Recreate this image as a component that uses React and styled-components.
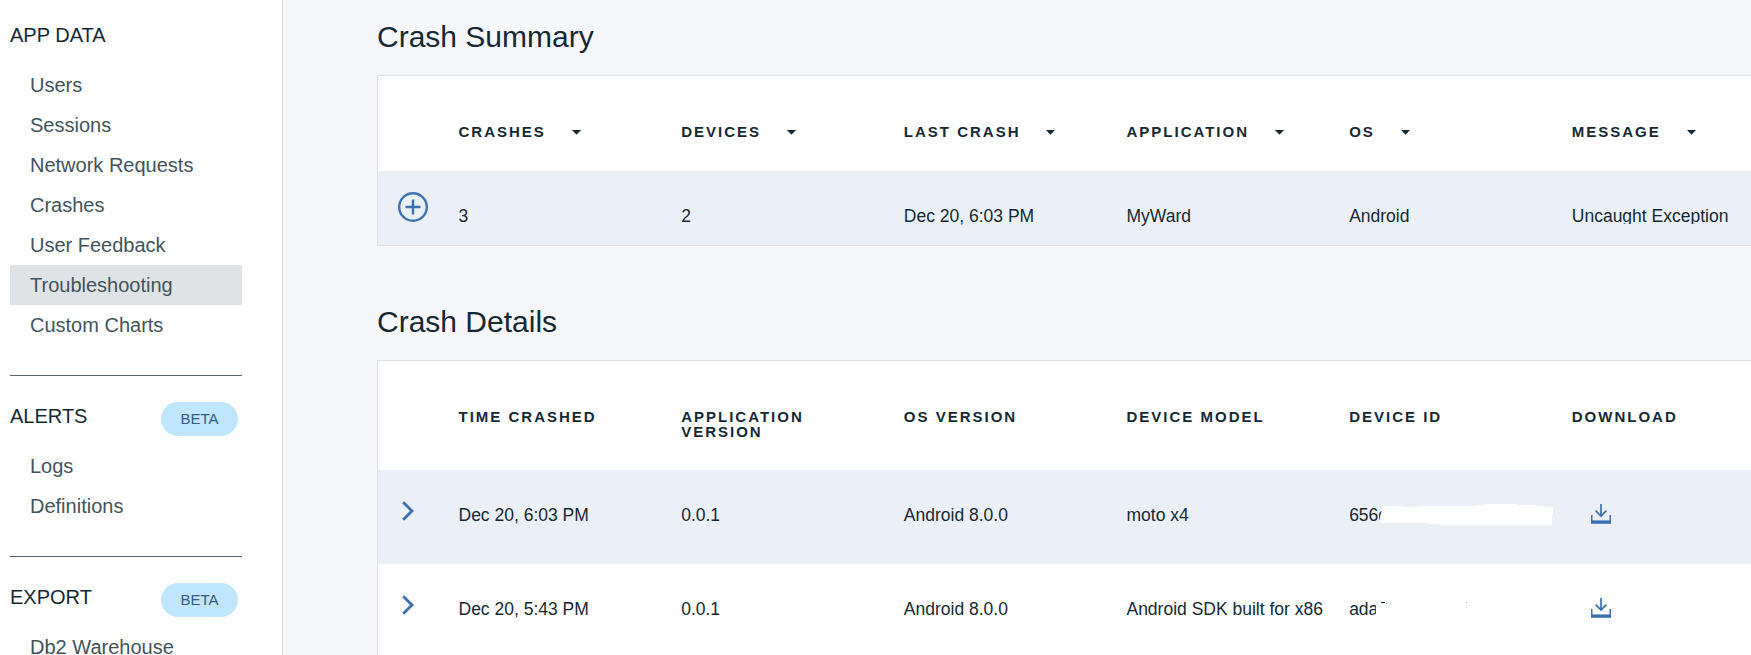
import React from "react";
import styled, { createGlobalStyle } from "styled-components";

const GlobalStyle = createGlobalStyle`
  * { box-sizing: border-box; }
  body {
    margin: 0;
    overflow: hidden;
    background: #f5f7fa;
    color: #152935;
    font-family: "Liberation Sans", Arial, sans-serif;
  }
`;

const Page = styled.div`
  display: flex;
  height: 655px;
  overflow: hidden;
`;

const Sidebar = styled.nav`
  flex: none;
  width: 283px;
  padding-left: 10px;
  background: #fff;
  border-right: 1px solid #dfe3e8;
`;

const NavSection = styled.section`
  width: 232px;
  height: ${(p) => p.$height}px;
  padding-top: ${(p) => p.$top}px;
  border-bottom: 1px solid #5a6872;
`;

const NavHeading = styled.div`
  display: flex;
  justify-content: space-between;
  padding-right: 4px;
  height: ${(p) => p.$height}px;
  font-size: 20px;
  line-height: 30px;
`;

const BetaHeading = styled(NavHeading)`
  line-height: 38px;
`;

const Beta = styled.span`
  width: 77px;
  height: 34px;
  margin-top: 5px;
  border-radius: 17px;
  background: #c0e6ff;
  color: #325c80;
  font-size: 15px;
  line-height: 34px;
  text-align: center;
`;

const NavItem = styled.a`
  display: block;
  height: 40px;
  padding-left: 20px;
  background: ${(p) => (p.$active ? "#dfe3e6" : "transparent")};
  color: #42535d;
  font-size: 20px;
  line-height: 40px;
  white-space: nowrap;
`;

const Main = styled.main`
  flex: 1;
  min-width: 0;
  padding: 19px 0 0 94px;
  overflow: hidden;
`;

const Panel = styled.section`
  width: 1418px;
  margin-bottom: 58px;
`;

const Title = styled.h2`
  height: 56px;
  margin: 0;
  font-size: 30px;
  font-weight: 400;
  line-height: 36px;
`;

const Table = styled.div`
  background: #fff;
  border: 1px solid #dfe3e6;
`;

const Row = styled.div`
  display: grid;
  grid-template-columns: 80.5px repeat(6, 222.66px);
  height: ${(p) => p.$height}px;
  padding-top: ${(p) => p.$top}px;
  background: ${(p) => (p.$shaded ? "#ebf0f7" : "transparent")};
`;

const HeaderCell = styled.div`
  display: flex;
  padding-right: 60px;
  font-size: 15px;
  font-weight: 700;
  line-height: 15px;
  letter-spacing: 2px;
  white-space: ${(p) => (p.$sortable ? "nowrap" : "normal")};
`;

const Cell = styled.div`
  height: ${(p) => (p.$clipped ? "18px" : "20px")};
  overflow: ${(p) => (p.$clipped ? "hidden" : "visible")};
  font-size: 17.5px;
  line-height: 20px;
  white-space: nowrap;
`;

const IconCell = styled.div`
  padding-left: ${(p) => p.$left}px;
  margin-top: ${(p) => p.$shift}px;
  height: 30px;
`;

const Icon = styled.svg`
  display: block;
`;

const Caret = styled.svg`
  flex: none;
  margin: 6px 0 0 26px;
`;

const DeviceId = styled(Cell)`
  position: relative;
`;

const VisibleId = styled.span`
  display: inline-block;
  width: ${(p) => p.$width}px;
  overflow: hidden;
  vertical-align: top;
`;

const Redaction = styled.svg`
  position: absolute;
  left: 29px;
  top: -1px;
`;

const SortCaret = () => (
  <Caret width="9" height="5" viewBox="0 0 9 5">
    <path d="M0 0h9L4.5 4.7z" fill="#152935" />
  </Caret>
);

const Plus = () => (
  <Icon width="30" height="30" viewBox="0 0 30 30" fill="none" stroke="#3d70b2" strokeWidth="2.4">
    <circle cx="15" cy="15" r="13.8" />
    <path d="M15 7.5v15M7.5 15h15" />
  </Icon>
);

const Chevron = () => (
  <Icon width="12" height="20" viewBox="0 0 12 20" fill="none" stroke="#3d70b2" strokeWidth="2.8">
    <path d="M1.2 1.2L10 10L1.2 18.8" />
  </Icon>
);

const Download = () => (
  <Icon width="20" height="20" viewBox="0 0 20 20" fill="none" stroke="#3d70b2">
    <path d="M10 0v12M4.6 6.6L10 12l5.4-5.4" strokeWidth="1.7" />
    <path d="M.75 11v8M19.25 11v8" strokeWidth="1.5" />
    <path d="M0 18.1h20" strokeWidth="3.4" />
  </Icon>
);

const summaryHeads = ["CRASHES", "DEVICES", "LAST CRASH", "APPLICATION", "OS", "MESSAGE"];
const detailHeads = ["TIME CRASHED", "APPLICATION VERSION", "OS VERSION", "DEVICE MODEL", "DEVICE ID", "DOWNLOAD"];

export default function App() {
  return (
    <Page>
      <GlobalStyle />
      <Sidebar>
        <NavSection $height={376} $top={20}>
          <NavHeading $height={45}>APP DATA</NavHeading>
          {["Users", "Sessions", "Network Requests", "Crashes", "User Feedback", "Troubleshooting", "Custom Charts"].map((t) => (
            <NavItem key={t} $active={t === "Troubleshooting"}>{t}</NavItem>
          ))}
        </NavSection>
        <NavSection $height={181} $top={21}>
          <BetaHeading $height={49}>ALERTS<Beta>BETA</Beta></BetaHeading>
          <NavItem>Logs</NavItem>
          <NavItem>Definitions</NavItem>
        </NavSection>
        <NavSection $height={181} $top={21}>
          <BetaHeading $height={49}>EXPORT<Beta>BETA</Beta></BetaHeading>
          <NavItem>Db2 Warehouse</NavItem>
        </NavSection>
      </Sidebar>
      <Main>
        <Panel>
          <Title>Crash Summary</Title>
          <Table>
            <Row $height={95} $top={48}>
              <span />
              {summaryHeads.map((t) => (
                <HeaderCell key={t} $sortable>{t}<SortCaret /></HeaderCell>
              ))}
            </Row>
            <Row $height={74} $top={35} $shaded>
              <IconCell $left={20} $shift={-14}><Plus /></IconCell>
              <Cell>3</Cell>
              <Cell>2</Cell>
              <Cell>Dec 20, 6:03 PM</Cell>
              <Cell>MyWard</Cell>
              <Cell>Android</Cell>
              <Cell $clipped>Uncaught Exception</Cell>
            </Row>
          </Table>
        </Panel>
        <Panel>
          <Title>Crash Details</Title>
          <Table>
            <Row $height={109} $top={48}>
              <span />
              {detailHeads.map((t) => (
                <HeaderCell key={t}>{t}</HeaderCell>
              ))}
            </Row>
            <Row $height={94} $top={35} $shaded>
              <IconCell $left={24} $shift={-4}><Chevron /></IconCell>
              <Cell>Dec 20, 6:03 PM</Cell>
              <Cell>0.0.1</Cell>
              <Cell>Android 8.0.0</Cell>
              <Cell>moto x4</Cell>
              <DeviceId>
                <VisibleId $width={40}>656c</VisibleId>
                <Redaction width="175" height="22" viewBox="0 0 175 22">
                  <path d="M4 2H24V3H40V2H98V1H107V0H139V1H158V2H165V3H175V11H174V21H62V20H51V19H3V17H2V13L3 9L4 6Z" fill="#fff" />
                </Redaction>
              </DeviceId>
              <IconCell $left={19.5} $shift={-1}><Download /></IconCell>
            </Row>
            <Row $height={94} $top={35}>
              <IconCell $left={24} $shift={-4}><Chevron /></IconCell>
              <Cell>Dec 20, 5:43 PM</Cell>
              <Cell>0.0.1</Cell>
              <Cell>Android 8.0.0</Cell>
              <Cell>Android SDK built for x86</Cell>
              <DeviceId>
                <VisibleId $width={27}>ada</VisibleId>
                <Redaction width="100" height="22" viewBox="0 0 100 22">
                  <path d="M3 4h4v1H3z" fill="#152935" />
                  <path d="M8 5h1v1H8zM88 4h1v1h-1z" fill="#79a9cf" />
                </Redaction>
              </DeviceId>
              <IconCell $left={19.5} $shift={-1}><Download /></IconCell>
            </Row>
          </Table>
        </Panel>
      </Main>
    </Page>
  );
}
